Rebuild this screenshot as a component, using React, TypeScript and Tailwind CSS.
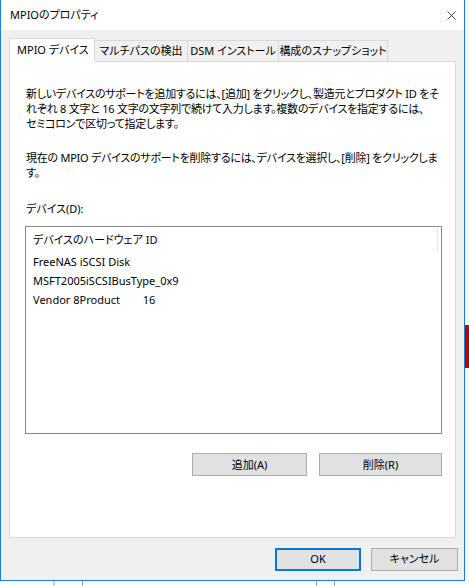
import { X } from "lucide-react";

const font = "font-['Noto_Sans','Noto_Sans_CJK_JP',sans-serif] [font-feature-settings:'palt']";

const tabs = ["マルチパスの検出", "DSM インストール", "構成のスナップショット"];
const tabWidths = ["w-[93px]", "w-[91px]", "w-[109px]"];

const devices = [
  "FreeNAS iSCSI Disk",
  "MSFT2005iSCSIBusType_0x9",
  "Vendor 8Product        16",
];

export default function App() {
  return (
    <div className={`w-[469px] h-[586px] bg-white flex flex-col text-[11px] text-black ${font}`}>
      <div className="flex h-[581px]">
        {/* Dialog window */}
        <div className="w-[465px] h-full flex flex-col border-x border-b border-[#1a7fd4]">
          {/* Title bar */}
          <div className="h-[30px] bg-white flex items-center justify-between pl-[9px] pr-[5px]">
            <span>MPIOのプロパティ</span>
            <X className="w-[15px] h-[15px]" strokeWidth={1.2} />
          </div>

          {/* Body */}
          <div className="flex-1 bg-[#f0f0f0] flex flex-col pl-[8px] pr-[6px] pt-[7px]">
            {/* Tabs */}
            <div className="flex items-end h-[24px] whitespace-nowrap">
              <div className="w-[86px] h-[24px] bg-white border-x border-t border-[#d9d9d9] flex items-center pl-[7px] -mb-px relative z-10">
                MPIO デバイス
              </div>
              {tabs.map((t, i) => (
                <div
                  key={t}
                  className={`${tabWidths[i]} h-[21px] border-t border-r border-[#d9d9d9] flex items-center justify-center bg-[#f0f0f0]`}
                >
                  {t}
                </div>
              ))}
            </div>

            {/* Panel */}
            <div className="w-[447px] h-[477px] bg-white border border-[#d9d9d9] flex flex-col pl-[15px] pt-[24px] leading-[15px]">
              <p className="pl-[1px] whitespace-nowrap tracking-[-0.25px]">
                新しいデバイスのサポートを追加するには、[追加] をクリックし、製造元とプロダクト ID をそ
                <br />
                れぞれ 8 文字と 16 文字の文字列で続けて入力します。複数のデバイスを指定するには、
                <br />
                セミコロンで区切って指定します。
              </p>
              <p className="pl-[1px] mt-[19px] whitespace-nowrap tracking-[-0.25px]">
                現在の MPIO デバイスのサポートを削除するには、デバイスを選択し、[削除] をクリックしま
                <br />
                す。
              </p>
              <div className="pl-[1px] mt-[21px]">デバイス(D):</div>

              {/* List */}
              <div className="mt-[10px] w-[417px] h-[208px] border border-[#828790] flex flex-col">
                <div className="h-[25px] flex items-center">
                  <div className="flex-1 pl-[7px]">デバイスのハードウェア ID</div>
                  <div className="w-px h-[24px] bg-[#e5e5e5] mr-[3px]" />
                </div>
                {devices.map((d) => (
                  <div key={d} className="h-[19px] flex items-center pl-[7px] whitespace-pre">
                    {d}
                  </div>
                ))}
              </div>

              <div className="flex justify-end gap-[12px] w-[417px] mt-[19px]">
                <button className="w-[115px] h-[23px] bg-[#e1e1e1] border border-[#adadad]">
                  追加(A)
                </button>
                <button className="w-[123px] h-[23px] bg-[#e1e1e1] border border-[#adadad]">
                  削除(R)
                </button>
              </div>
            </div>

            {/* Footer */}
            <div className="flex justify-end gap-[10px] mt-[10px]">
              <button className="w-[86px] h-[23px] bg-[#e1e1e1] border-2 border-[#0078d7]">OK</button>
              <button className="w-[87px] h-[23px] bg-[#e1e1e1] border border-[#adadad]">キャンセル</button>
            </div>
          </div>
        </div>

        {/* Background app strip on the right */}
        <div className="flex-1 flex flex-col bg-[#f7f7f7]">
          <div className="h-[325px]" />
          <div className="h-[43px] bg-[#c00000]" />
        </div>
      </div>

      {/* Background app strip below */}
      <div className="flex-1 flex">
        <div className="w-[53px]" />
        <div className="w-[2px] bg-[#d0d0d0]" />
        <div className="w-[27px]" />
        <div className="w-px bg-[#a0a0a0]" />
        <div className="w-[233px]" />
        <div className="w-px bg-[#a0a0a0]" />
        <div className="w-[17px]" />
        <div className="w-px bg-[#a0a0a0]" />
      </div>
    </div>
  );
}
